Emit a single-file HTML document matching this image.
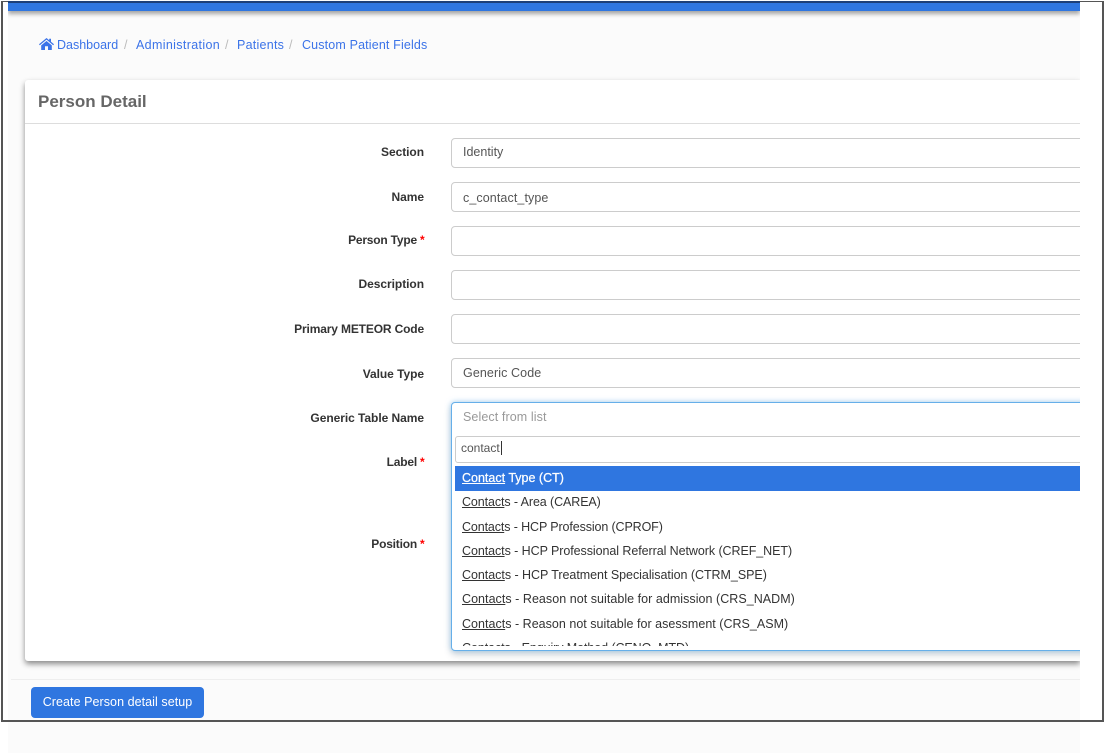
<!DOCTYPE html>
<html><head><meta charset="utf-8"><style>
html,body{margin:0;padding:0;background:#fff;width:1104px;height:753px;overflow:hidden}
body{position:relative;font-family:"Liberation Sans",sans-serif;font-size:12px;color:#333}
div,span.a{position:absolute}
.nw{white-space:nowrap}
.crumb{color:#3b73e8;top:37px;font-size:12.5px;line-height:16px;white-space:nowrap}
.sep{color:#bbb;top:37px;font-size:12.5px;line-height:16px}
.lab{right:680px;font-weight:bold;color:#333;font-size:12px;line-height:16px;white-space:nowrap;letter-spacing:-.05px}
.lab.st{right:687px}
.lab.st i{position:absolute;left:100%;margin-left:3px;top:0;color:#f00;font-style:normal}
.inp{left:451px;width:640px;height:28px;border:1px solid #ccc;border-radius:4px;background:#fff}
.val{left:463px;color:#555;font-size:12.5px;line-height:16px;white-space:nowrap;letter-spacing:.1px}
.opt{left:462px;font-size:12.5px;line-height:16px;color:#333;white-space:nowrap}
.opt u{text-underline-offset:1px}
</style></head><body>
<div style="left:8px;top:0;width:1072px;height:753px;background:#fbfbfb"></div>
<div style="left:8px;top:2px;width:1072px;height:9px;background:#2f76e0;box-shadow:0 3px 4px rgba(0,0,0,.35);clip-path:inset(0 0 -10px 0)"></div>

<svg style="position:absolute;left:39px;top:38px" width="15" height="12" viewBox="0 0 15 12"><path fill="#3b73e8" d="M7.5 0 L10.2 2.3V.8h1.8v3L15 6.3l-.8.9L7.5 1.6.8 7.2 0 6.3ZM2.2 7.4 7.5 3l5.3 4.4V12H9V8.3H6V12H2.2Z"/></svg>
<div class="crumb" style="left:57px">Dashboard</div><div class="sep" style="left:124px">/</div>
<div class="crumb" style="left:136px;letter-spacing:.35px">Administration</div><div class="sep" style="left:225px">/</div>
<div class="crumb" style="left:237px;letter-spacing:.25px">Patients</div><div class="sep" style="left:289px">/</div>
<div class="crumb" style="left:302px;letter-spacing:.15px">Custom Patient Fields</div>

<div style="left:25px;top:80px;width:1055px;height:581px;background:#fff;border-radius:3px 0 0 3px;box-shadow:0 3px 6px rgba(0,0,0,.45);clip-path:inset(-10px 0 -10px -10px)"></div>
<div class="nw" style="left:38px;top:91px;font-size:17px;line-height:22px;font-weight:bold;color:#666">Person Detail</div>
<div style="left:25px;top:123px;width:1055px;height:1px;background:#ddd"></div>

<div class="lab" style="top:144px">Section</div>
<div class="lab" style="top:189px">Name</div>
<div class="lab st" style="top:232px;letter-spacing:-.2px">Person Type<i>*</i></div>
<div class="lab" style="top:276px">Description</div>
<div class="lab" style="top:321px;letter-spacing:-.15px">Primary METEOR Code</div>
<div class="lab" style="top:366px">Value Type</div>
<div class="lab" style="top:410px">Generic Table Name</div>
<div class="lab st" style="top:454px;letter-spacing:-.2px">Label<i>*</i></div>
<div class="lab st" style="top:536px;letter-spacing:-.2px">Position<i>*</i></div>

<div style="left:0;top:0;width:1080px;height:753px;overflow:hidden;pointer-events:none">
<div class="inp" style="top:138px"></div>
<div class="inp" style="top:182px"></div>
<div class="inp" style="top:226px"></div>
<div class="inp" style="top:270px"></div>
<div class="inp" style="top:314px"></div>
<div class="inp" style="top:358px"></div>
<div class="inp" style="top:402px;height:247px;border-color:#66afe9;box-shadow:0 0 6px rgba(102,175,233,.6),0 4px 8px rgba(0,0,0,.15)"></div>
<div style="left:455px;top:436px;width:640px;height:25px;border:1px solid #ccc;border-radius:3px;background:#fff"></div>
<div style="left:455px;top:466px;width:640px;height:25px;background:#2f76e0"></div>
</div>

<div class="val" style="top:144px;letter-spacing:0">Identity</div>
<div class="val" style="top:190px">c_contact_type</div>
<div class="val" style="top:365px">Generic Code</div>
<div class="val" style="top:409px;color:#999">Select from list</div>
<div class="val" style="left:461px;top:440px;font-size:12px;letter-spacing:0">contact</div>
<div style="left:501px;top:441px;width:1px;height:14px;background:#333"></div>

<div class="opt" style="top:470px;color:#fff;-webkit-text-stroke:.25px #fff"><u>Contact</u> Type (CT)</div>
<div class="opt" style="top:494px;letter-spacing:-.1px"><u>Contact</u>s - Area (CAREA)</div>
<div class="opt" style="top:519px;letter-spacing:-.12px"><u>Contact</u>s - HCP Profession (CPROF)</div>
<div class="opt" style="top:543px;letter-spacing:-.07px"><u>Contact</u>s - HCP Professional Referral Network (CREF_NET)</div>
<div class="opt" style="top:567px;letter-spacing:-.04px"><u>Contact</u>s - HCP Treatment Specialisation (CTRM_SPE)</div>
<div class="opt" style="top:591px;letter-spacing:.04px"><u>Contact</u>s - Reason not suitable for admission (CRS_NADM)</div>
<div class="opt" style="top:616px;letter-spacing:.02px"><u>Contact</u>s - Reason not suitable for asessment (CRS_ASM)</div>
<div style="left:455px;top:640px;width:620px;height:6px;overflow:hidden"><div class="opt" style="left:7px;top:0;letter-spacing:-.08px"><u>Contact</u>s - Enquiry Method (CENQ_MTD)</div></div>

<div style="left:11px;top:679px;width:1069px;height:1px;background:#eee"></div>
<div class="nw" style="left:31px;top:687px;width:173px;height:31px;background:#2f76e0;border-radius:4px;color:#fff;font-size:12.5px;line-height:30px;text-align:center;letter-spacing:.06px">Create Person detail setup</div>

<div style="left:1px;top:1px;width:1099px;height:718px;border:solid #555;border-width:1px 2px 2px 2px;pointer-events:none"></div>
<div style="left:8px;top:1px;width:1072px;height:2px;background:#1d3f78"></div>
</body></html>
